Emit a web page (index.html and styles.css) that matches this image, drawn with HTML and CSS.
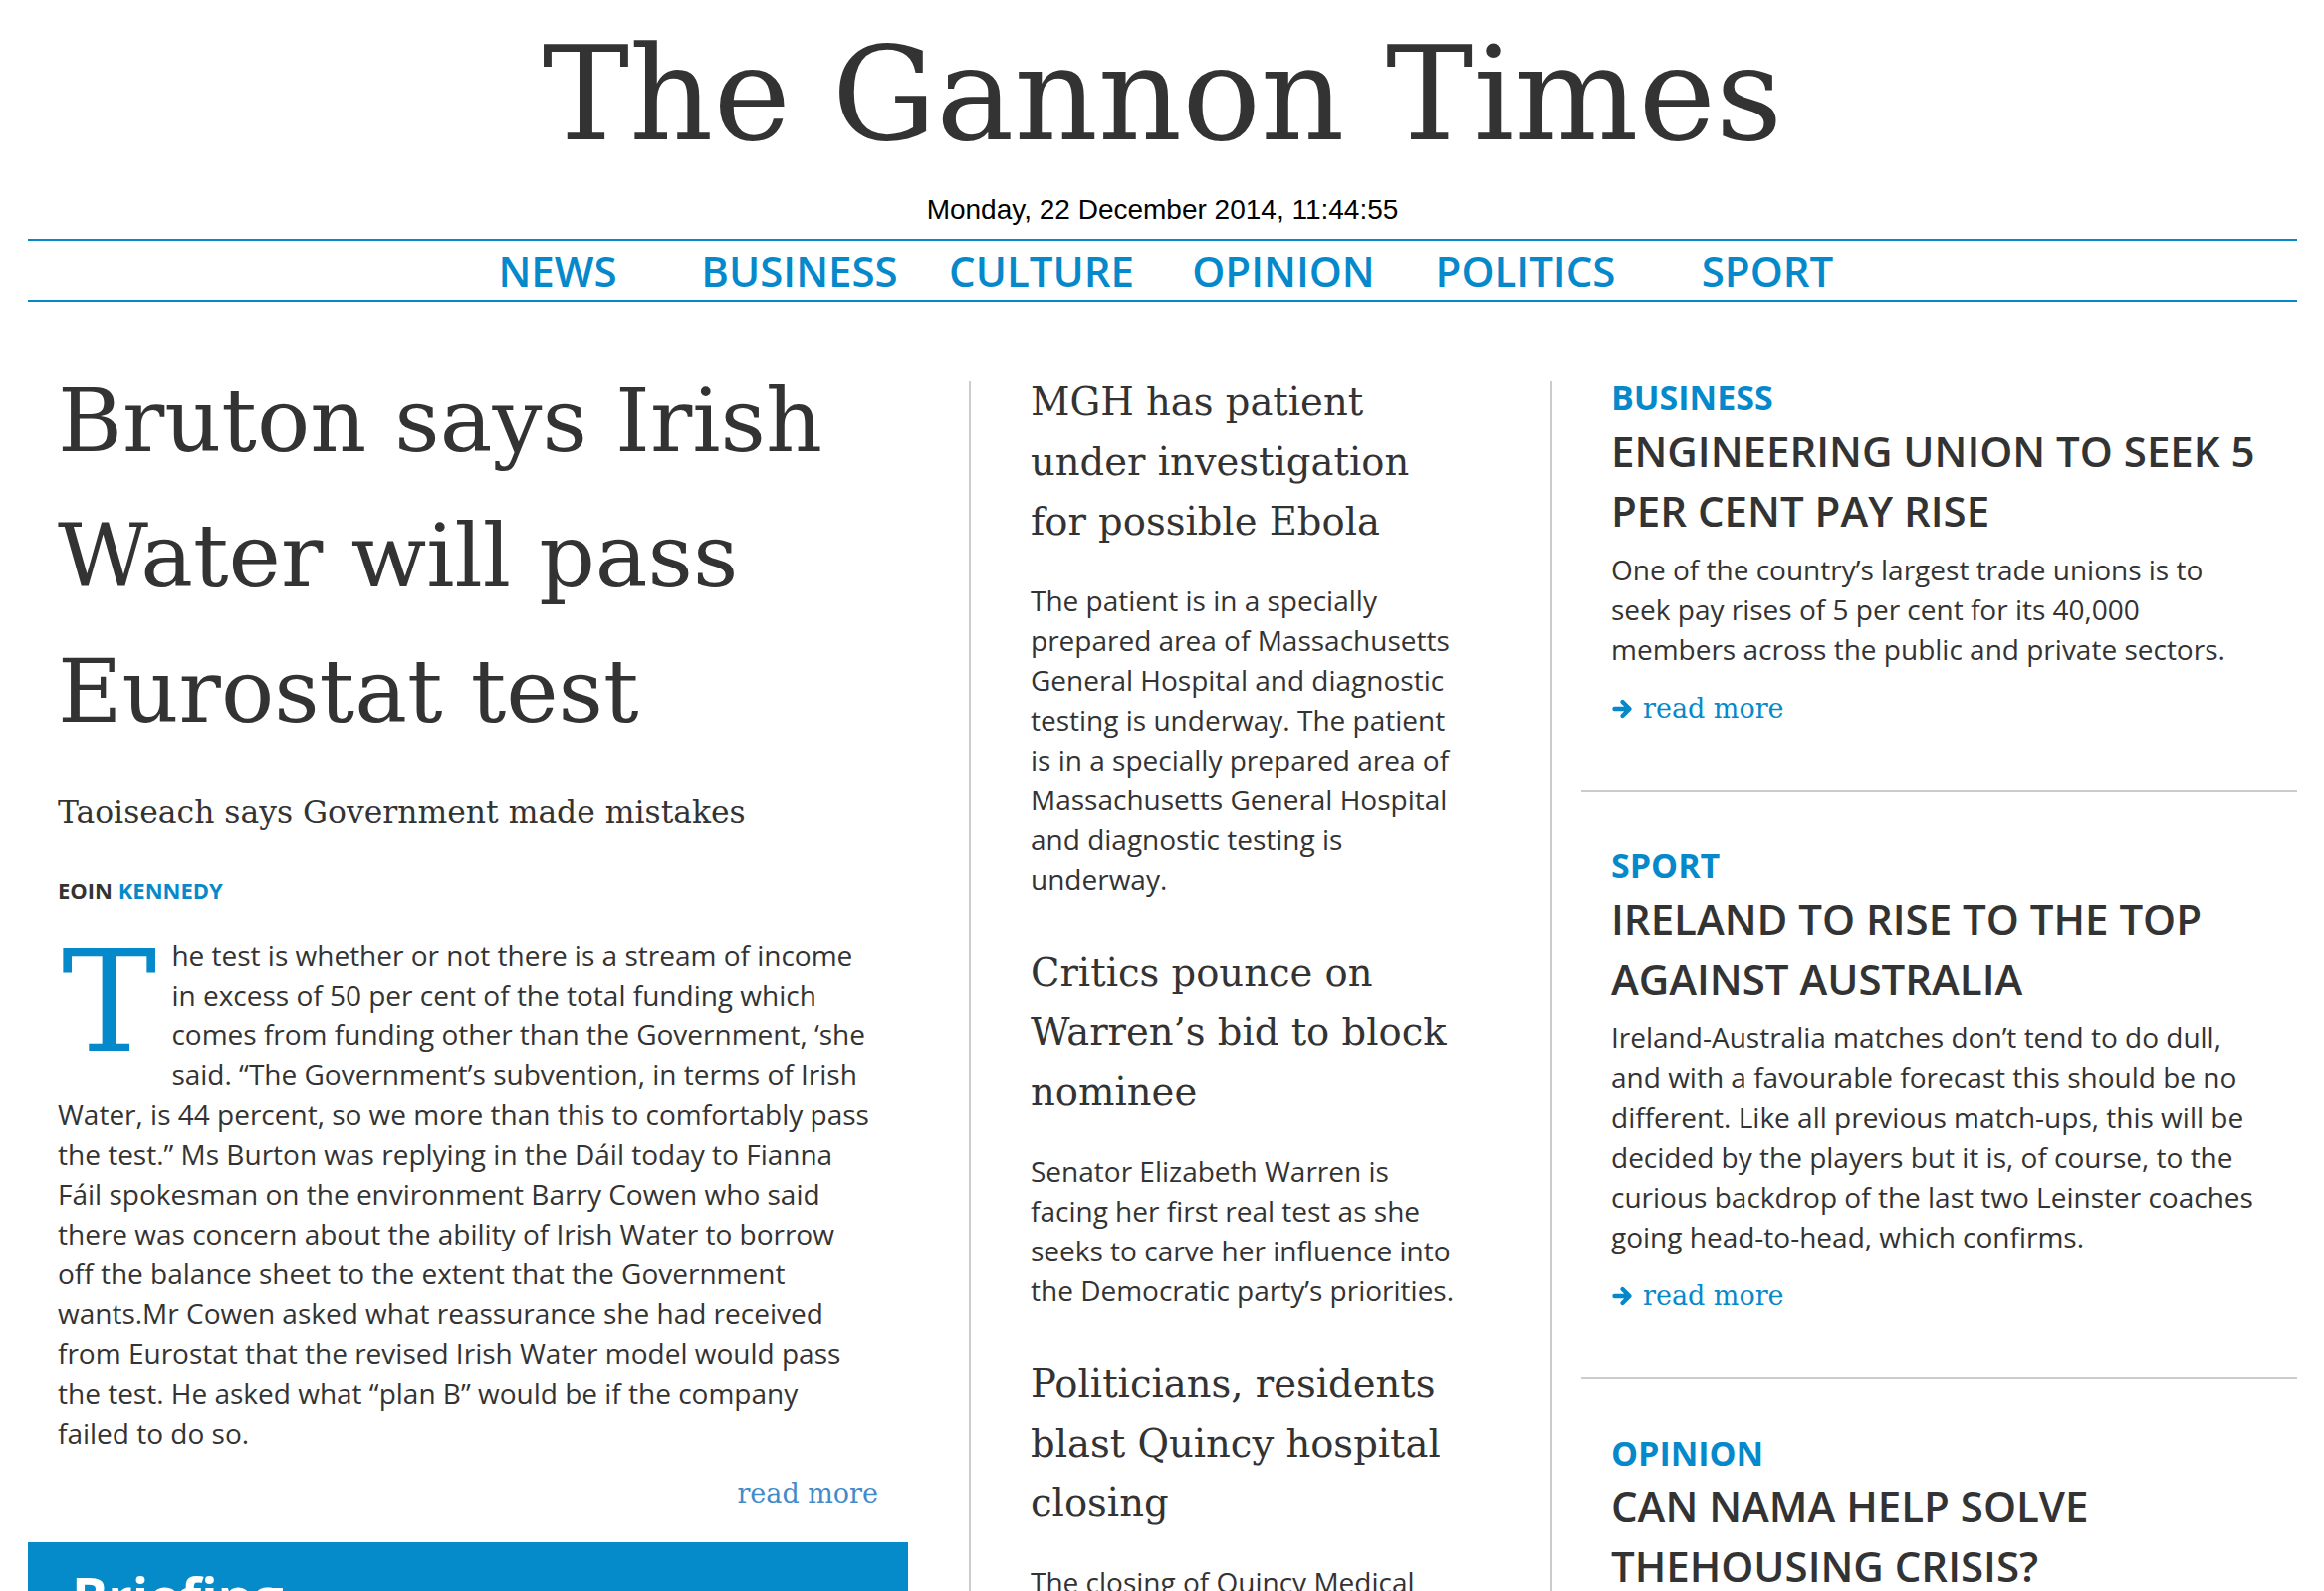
FILE: index.html
```html
<!DOCTYPE html>
<html lang="en">
<head>
<meta charset="utf-8">
<title>The Gannon Times</title>
<link rel="stylesheet" href="styles.css">
</head>
<body>
<div class="page">
  <header class="masthead">
    <h1 class="title">The Gannon Times</h1>
    <div class="date">Monday, 22 December 2014, 11:44:55</div>
    <nav class="nav">
      <a href="#">NEWS</a>
      <a href="#">BUSINESS</a>
      <a href="#">CULTURE</a>
      <a href="#">OPINION</a>
      <a href="#">POLITICS</a>
      <a href="#">SPORT</a>
    </nav>
  </header>

  <main class="columns">
    <section class="col-left">
      <article class="lead">
        <h2 class="lead-title">Bruton says Irish Water will pass Eurostat test</h2>
        <p class="standfirst">Taoiseach says Government made mistakes</p>
        <p class="byline">EOIN <span class="byline-name">KENNEDY</span></p>
        <p class="lead-body"><span class="dropcap">T</span>he test is whether or not there is a stream of income in excess of 50 per cent of the total funding which comes from funding other than the Government, ‘she said. “The Government’s subvention, in terms of Irish Water, is 44 percent, so we more than this to comfortably pass the test.” Ms Burton was replying in the Dáil today to Fianna Fáil spokesman on the environment Barry Cowen who said there was concern about the ability of Irish Water to borrow off the balance sheet to the extent that the Government wants.Mr Cowen asked what reassurance she had received from Eurostat that the revised Irish Water model would pass the test. He asked what “plan B” would be if the company failed to do so.</p>
        <p class="lead-more"><a href="#">read more</a></p>
      </article>
      <div class="briefing">
        <h2 class="briefing-title">Briefing</h2>
      </div>
    </section>

    <section class="col-mid">
      <article class="mid-story">
        <h3 class="mid-title">MGH has patient under investigation for possible Ebola</h3>
        <p class="mid-body">The patient is in a specially prepared area of Massachusetts General Hospital and diagnostic testing is underway. The patient is in a specially prepared area of Massachusetts General Hospital and diagnostic testing is underway.</p>
      </article>
      <article class="mid-story">
        <h3 class="mid-title">Critics pounce on Warren’s bid to block nominee</h3>
        <p class="mid-body">Senator Elizabeth Warren is facing her first real test as she seeks to carve her influence into the Democratic party’s priorities.</p>
      </article>
      <article class="mid-story">
        <h3 class="mid-title">Politicians, residents blast Quincy hospital closing</h3>
        <p class="mid-body">The closing of Quincy Medical Center has drawn criticism from politicians and residents alike.</p>
      </article>
    </section>

    <section class="col-right">
      <article class="side-story">
        <div class="side-label">BUSINESS</div>
        <h3 class="side-title">ENGINEERING UNION TO SEEK 5 PER CENT PAY RISE</h3>
        <p class="side-body">One of the country’s largest trade unions is to seek pay rises of 5 per cent for its 40,000 members across the public and private sectors.</p>
        <a class="side-more" href="#"><svg class="arrow" viewBox="0 0 24 24" width="24" height="24" aria-hidden="true"><path d="M3.5 12h14M11.5 5 18.5 12l-7 7" fill="none" stroke="currentColor" stroke-width="4.4" stroke-linecap="round" stroke-linejoin="round"/></svg>read more</a>
      </article>
      <article class="side-story">
        <div class="side-label">SPORT</div>
        <h3 class="side-title">IRELAND TO RISE TO THE TOP AGAINST AUSTRALIA</h3>
        <p class="side-body">Ireland-Australia matches don’t tend to do dull, and with a favourable forecast this should be no different. Like all previous match-ups, this will be decided by the players but it is, of course, to the curious backdrop of the last two Leinster coaches going head-to-head, which confirms.</p>
        <a class="side-more" href="#"><svg class="arrow" viewBox="0 0 24 24" width="24" height="24" aria-hidden="true"><path d="M3.5 12h14M11.5 5 18.5 12l-7 7" fill="none" stroke="currentColor" stroke-width="4.4" stroke-linecap="round" stroke-linejoin="round"/></svg>read more</a>
      </article>
      <article class="side-story">
        <div class="side-label">OPINION</div>
        <h3 class="side-title">CAN NAMA HELP SOLVE THEHOUSING CRISIS?</h3>
        <p class="side-body">Housing supply remains the most pressing issue facing the country.</p>
      </article>
    </section>
  </main>
</div>
</body>
</html>
```

FILE: styles.css
```css
html, body {
  margin: 0;
  padding: 0;
  background: #ffffff;
}

body {
  color: #333333;
  font-family: "Open Sans", "DejaVu Sans", sans-serif;
  overflow: hidden;
}

a {
  text-decoration: none;
}

.page {
  padding: 0 27px 0 28px;
}

/* ---------- masthead ---------- */
.masthead {
  text-align: center;
}

.title {
  margin: 0;
  padding-top: 25px;
  font-family: "DejaVu Serif", "Liberation Serif", serif;
  font-weight: normal;
  font-size: 131px;
  line-height: 140px;
  color: #333333;
}

.date {
  margin-top: 30px;
  font-family: "Liberation Sans", Arial, sans-serif;
  font-size: 28px;
  line-height: 32px;
  color: #000000;
}

.nav {
  display: flex;
  justify-content: center;
  margin-top: 13px;
  border-top: 2px solid #0689ca;
  border-bottom: 2px solid #0689ca;
  height: 59px;
}

.nav a {
  width: 243px;
  text-align: center;
  font-family: "Open Sans", sans-serif;
  font-weight: 600;
  font-size: 42px;
  line-height: 59px;
  color: #0689ca;
}

/* ---------- columns ---------- */
.columns {
  display: flex;
  align-items: stretch;
  margin-top: 80px;
  min-height: 1300px;
}

.col-left {
  flex: none;
  width: 884px;
}

.lead {
  padding: 0 36px 0 30px;
}

.lead-title {
  margin: -28px 0 0;
  font-family: "DejaVu Serif", "Liberation Serif", serif;
  font-weight: normal;
  font-size: 88.5px;
  line-height: 136px;
  color: #333333;
}

.standfirst {
  margin: 31px 0 0;
  font-family: "DejaVu Serif", "Liberation Serif", serif;
  font-size: 31.4px;
  line-height: 44px;
  color: #333333;
}

.byline {
  margin: 41px 0 0;
  font-weight: 700;
  font-size: 22px;
  line-height: 30px;
  color: #333333;
}

.byline-name {
  color: #0689ca;
}

.lead-body {
  margin: 30px 0 0;
  font-size: 28px;
  line-height: 40px;
  color: #333333;
}

.dropcap {
  float: left;
  font-family: "DejaVu Serif", "Liberation Serif", serif;
  font-size: 143px;
  line-height: 120px;
  margin: 8px 15px 0 4px;
  color: #0689ca;
}

.lead-more {
  margin: 22px -6px 0 0;
  text-align: right;
  font-family: "DejaVu Serif", "Liberation Serif", serif;
  font-size: 27px;
  line-height: 40px;
}

.lead-more a {
  color: #428bca;
}

.briefing {
  margin-top: 28px;
  background: #068bca;
  padding: 17px 44px 40px;
}

.briefing-title {
  margin: 0;
  font-family: "Open Sans", sans-serif;
  font-weight: 700;
  font-size: 54px;
  line-height: 74px;
  color: #ffffff;
}

.col-mid {
  flex: none;
  width: 432px;
  margin-left: 61px;
  padding: 0 90px 0 60px;
  border-left: 2px solid #cccccc;
}

.mid-story + .mid-story {
  margin-top: 44px;
}

.mid-title {
  margin: -9px 0 0;
  font-family: "DejaVu Serif", "Liberation Serif", serif;
  font-weight: normal;
  font-size: 38.5px;
  line-height: 60px;
  color: #333333;
}

.mid-story + .mid-story .mid-title {
  margin-top: 0;
}

.mid-body {
  margin: 29px 0 0;
  font-size: 28px;
  line-height: 40px;
  color: #333333;
}

.col-right {
  flex: 1;
  padding-left: 29px;
  border-left: 2px solid #cccccc;
}

.side-story {
  padding: 0 36px 61px 30px;
  border-bottom: 2px solid #cccccc;
}

.side-story + .side-story {
  padding-top: 58px;
}

.side-label {
  margin-top: -4px;
  font-weight: 700;
  font-size: 34px;
  line-height: 40px;
  color: #0689ca;
}

.side-title {
  margin: 4px 0 0;
  font-weight: 600;
  font-size: 42px;
  line-height: 60px;
  color: #333333;
}

.side-body {
  margin: 9px 0 0;
  font-size: 28px;
  line-height: 40px;
  color: #333333;
}

.side-more {
  display: inline-flex;
  align-items: center;
  gap: 8px;
  margin-top: 20px;
  font-family: "DejaVu Serif", "Liberation Serif", serif;
  font-size: 27px;
  line-height: 40px;
  color: #0689ca;
}

.arrow {
  flex: none;
}
```
